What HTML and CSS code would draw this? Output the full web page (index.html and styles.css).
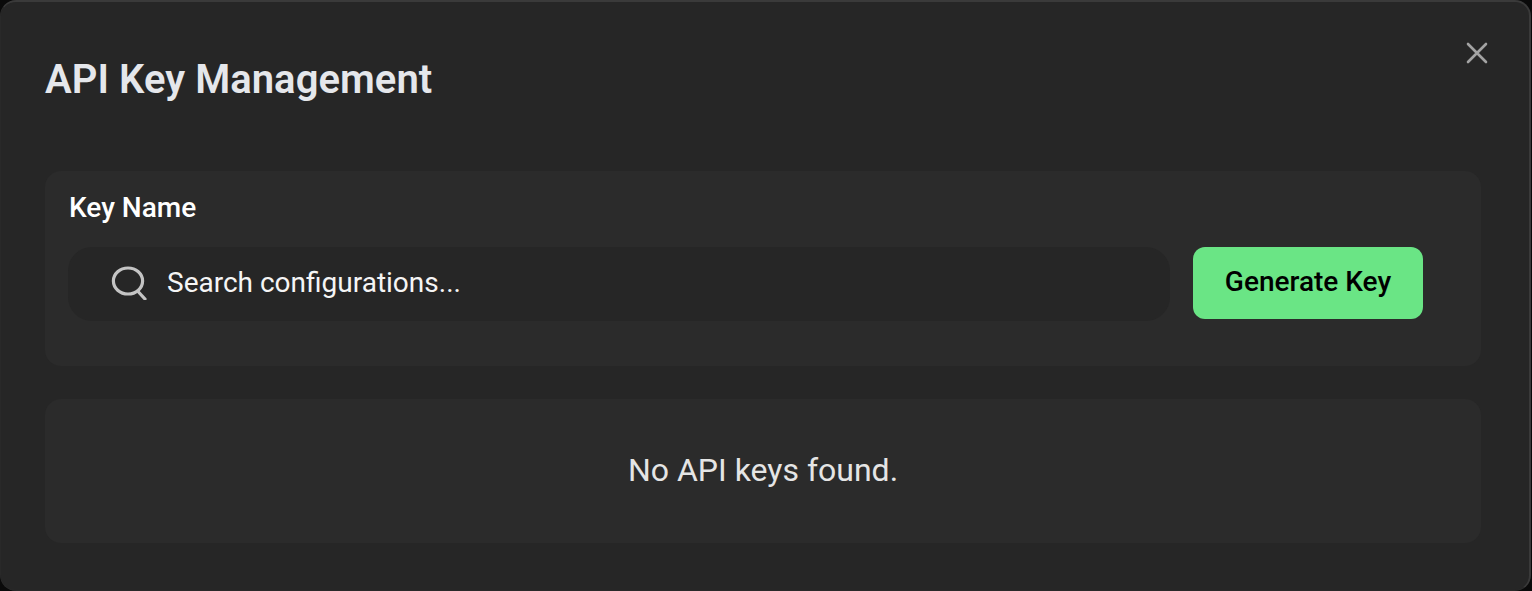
FILE: index.html
```html
<!DOCTYPE html>
<html lang="en">
<head>
  <meta charset="UTF-8">
  <meta name="viewport" content="width=device-width, initial-scale=1.0">
  <title>API Key Management</title>
  <link rel="stylesheet" href="styles.css">
</head>
<body>
  <!-- Modal dialog -->
  <div class="dialog">
    <button class="close-btn" aria-label="Close">
      <svg width="24" height="24" viewBox="0 0 24 24" fill="none" stroke="currentColor" stroke-width="2.6" stroke-linecap="round">
        <path d="M3 3 L21 21 M21 3 L3 21"/>
      </svg>
    </button>

    <h1 class="title">API Key Management</h1>

    <!-- New key form -->
    <section class="panel form-panel">
      <label class="field-label">Key Name</label>
      <div class="form-row">
        <div class="search-box">
          <svg class="search-icon" width="36" height="36" viewBox="0 0 36 36" fill="none" stroke="currentColor" stroke-width="3.2" stroke-linecap="round">
            <ellipse cx="17" cy="17" rx="14.6" ry="13"/>
            <path d="M27.5 28 L34 35"/>
          </svg>
          <span class="search-text">Search configurations...</span>
        </div>
        <button class="generate-btn">Generate Key</button>
      </div>
    </section>

    <!-- Key list, empty state -->
    <section class="panel empty-panel">No API keys found.</section>
  </div>
</body>
</html>
```

FILE: styles.css
```css
* {
  box-sizing: border-box;
}

html,
body {
  margin: 0;
  height: 591px;
  overflow: hidden;
  background-color: #0a0a0a;
}

body {
  font-family: Roboto, 'Liberation Sans', sans-serif;
}

/* Modal dialog */
.dialog {
  position: relative;
  height: 591px;
  margin-right: 1px;
  padding: 0 48px 0 44px;
  border-style: solid;
  border-width: 2px 2px 1px 1px;
  border-color: #3a3a3a #3a3a3a #292929 #292929;
  border-radius: 16px;
  background-color: #262626;
}

.close-btn {
  position: absolute;
  top: 39px;
  right: 40px;
  display: flex;
  padding: 0;
  border: none;
  background: none;
  color: #a3a3a3;
  cursor: pointer;
}

.title {
  margin: 0;
  padding-top: 54px;
  height: 169px;
  font-size: 40px;
  line-height: 48px;
  font-weight: 600;
  letter-spacing: 0.05px;
  color: #e5e7eb;
}

/* Panels */
.panel {
  border-radius: 16px;
  background-color: #2b2b2b;
}

.form-panel {
  height: 195px;
  padding: 20px 58px 0 23px;
}

.field-label {
  display: block;
  height: 56px;
  padding-left: 1px;
  font-size: 28px;
  line-height: 34px;
  font-weight: 500;
  color: #fff;
}

.form-row {
  display: flex;
  align-items: flex-start;
  gap: 23px;
}

.search-box {
  display: flex;
  align-items: center;
  flex: 1;
  height: 74px;
  padding: 0 0 4px 43px;
  gap: 20px;
  border-radius: 24px;
  background-color: #262626;
}

.search-icon {
  color: #c4c4c4;
}

.search-text {
  font-size: 28px;
  color: #f5f5f5;
}

.generate-btn {
  width: 230px;
  height: 72px;
  padding: 0 0 4px;
  border: none;
  border-radius: 12px;
  font-family: inherit;
  font-size: 28px;
  font-weight: 500;
  color: #000;
  background-color: #6ae585;
  cursor: pointer;
}

.empty-panel {
  display: flex;
  align-items: center;
  justify-content: center;
  height: 144px;
  margin-top: 33px;
  padding-bottom: 2px;
  font-size: 32px;
  color: #e5e5e5;
}
```
